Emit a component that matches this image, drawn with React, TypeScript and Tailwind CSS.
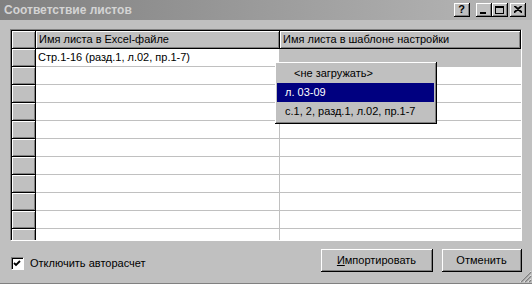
import React from "react";

const raised = "shadow-[inset_1px_1px_#ffffff,inset_-1px_-1px_#808080]";

function TitleButton({ children, className = "" }: { children: React.ReactNode; className?: string }) {
  return (
    <div
      className={`w-[16px] h-[14px] bg-[#c0c0c0] border-r border-b border-black shadow-[inset_1px_1px_#ffffff,inset_-1px_-1px_#808080] flex items-center justify-center ${className}`}
    >
      {children}
    </div>
  );
}

function Button({ children, w }: { children: React.ReactNode; w: string }) {
  return (
    <button
      type="button"
      className={`${w} h-[23px] bg-[#c0c0c0] border-r border-b border-black ${raised} text-[11px] text-black flex items-center justify-center`}
    >
      {children}
    </button>
  );
}

const rows = Array.from({ length: 11 });

export default function App() {
  return (
    <div
      className="relative w-[532px] h-[284px] bg-[#c0c0c0] flex flex-col border-b border-[#808080] overflow-hidden"
      style={{ fontFamily: '"Liberation Sans", Arial, sans-serif' }}
    >
      {/* title */}
      <div className="h-[20px] flex items-center bg-gradient-to-r from-[#808080] to-[#b8b8b8] pl-[4px] pr-[6px]">
        <span className="text-[12px] font-bold text-[#d4d4d4]">Соответствие листов</span>
        <div className="ml-auto flex items-center">
          <TitleButton>
            <span className="text-[11px] font-bold leading-none text-black">?</span>
          </TitleButton>
          <div className="w-[6px]" />
          <TitleButton>
            <div className="w-[6px] h-[2px] bg-black mt-[6px] -ml-[2px]" />
          </TitleButton>
          <TitleButton>
            <div className="w-[9px] h-[8px] border border-black border-t-2" />
          </TitleButton>
          <div className="w-[2px]" />
          <TitleButton>
            <svg width="8" height="7" viewBox="0 0 8 7">
              <path d="M0 0 L8 7 M1 0 L8 6 M8 0 L0 7 M7 0 L0 6" stroke="black" strokeWidth="1.2" />
            </svg>
          </TitleButton>
        </div>
      </div>

      {/* grid */}
      <div className="relative mt-[9px] mx-[10px] h-[212px] border-t border-l border-[#808080] border-b border-r border-b-white border-r-white">
        <div className="h-full border-t border-l border-black overflow-hidden flex flex-col text-[11px] text-black">
          <div className="h-[18px] flex shrink-0">
            <div className={`w-[24px] bg-[#c0c0c0] border-r border-b border-black ${raised}`} />
            <div className={`w-[244px] bg-[#c0c0c0] border-r border-b border-black ${raised} flex items-center pl-[3px]`}>
              Имя листа в Excel-файле
            </div>
            <div className={`w-[241px] bg-[#c0c0c0] border-r border-b border-black ${raised} flex items-center pl-[3px]`}>
              Имя листа в шаблоне настройки
            </div>
          </div>
          {rows.map((_, i) => (
            <div key={i} className="h-[18px] flex shrink-0">
              <div className={`w-[24px] bg-[#c0c0c0] border-r border-b border-black ${raised}`} />
              <div className="w-[244px] bg-white border-r border-b border-[#c0c0c0] flex items-center pl-[2px]">
                {i === 0 ? "Стр.1-16 (разд.1, л.02, пр.1-7)" : ""}
              </div>
              <div
                className={`w-[241px] border-b border-[#c0c0c0] ${i === 0 ? "bg-[#c0c0c0]" : "bg-white"}`}
              />
            </div>
          ))}
        </div>

        {/* dropdown list */}
        <div className="absolute left-[264px] top-[32px] w-[162px] h-[62px] bg-[#c0c0c0] border-r border-b border-black shadow-[inset_1px_1px_#ffffff,inset_-1px_-1px_#808080] p-[2px] flex flex-col text-[11px]">
          <div className="h-[19px] flex items-center pl-[17px] text-black">&lt;не загружать&gt;</div>
          <div className="h-[19px] flex items-center pl-[8px] bg-[#000080] text-white">л. 03-09</div>
          <div className="h-[19px] flex items-center pl-[8px] text-black">с.1, 2, разд.1, л.02, пр.1-7</div>
        </div>
      </div>

      {/* bottom */}
      <div className="flex items-start mt-[8px] pl-[11px] pr-[10px]">
        <div className="flex items-center mt-[6px]">
          <div className="w-[13px] h-[13px] bg-white border-t border-l border-[#808080] border-b border-r border-b-white border-r-white shadow-[inset_1px_1px_#000000] flex items-center justify-center">
            <svg width="9" height="9" viewBox="0 0 9 9">
              <path d="M1 4 L3 6 L7 2" stroke="black" strokeWidth="1.8" fill="none" />
            </svg>
          </div>
          <span className="ml-[6px] text-[11px] text-black">Отключить авторасчет</span>
        </div>
        <div className="ml-auto flex gap-[9px]">
          <Button w="w-[112px]">
            <span>
              <span className="underline">И</span>мпортировать
            </span>
          </Button>
          <Button w="w-[80px]">Отменить</Button>
        </div>
      </div>

      {/* size grip */}
      <svg className="absolute right-0 bottom-0" width="13" height="13" viewBox="0 0 13 13">
        <path d="M12 1 L1 12 M12 5 L5 12 M12 9 L9 12" stroke="#ffffff" strokeWidth="1" />
        <path d="M12 2 L2 12 M12 6 L6 12 M12 10 L10 12" stroke="#808080" strokeWidth="1.4" />
      </svg>
    </div>
  );
}
